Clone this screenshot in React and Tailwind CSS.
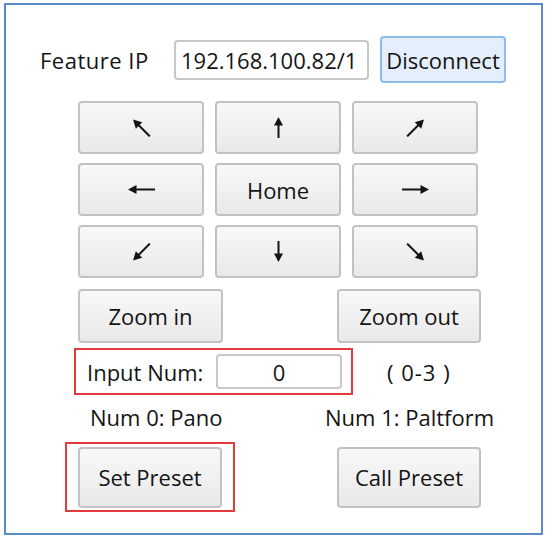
import React from 'react';

const Arrow = ({ len, className }) => (
    <svg width="11" height={len} viewBox={`0 0 11 ${len}`} className={className} aria-hidden>
        <polygon points="5.5,0 1,8.5 10,8.5" fill="#141414" />
        <line x1="5.5" y1="6" x2="5.5" y2={len} stroke="#141414" strokeWidth="2" />
    </svg>
);

const Btn = ({ className = '', children }) => (
    <button className={`flex items-center justify-center rounded-[4px] border-2 border-[#c2c2c2] bg-linear-to-b from-[#f8f8f8] to-[#e9e9e9] text-[#141414] ${className}`}>
        {children}
    </button>
);

const App = () => {
    const pad = [
        <Arrow key="nw" len={24} className="-rotate-45" />,
        <Arrow key="n" len={21} />,
        <Arrow key="ne" len={24} className="rotate-45" />,
        <Arrow key="w" len={27} className="-rotate-90" />,
        <span key="home">Home</span>,
        <Arrow key="e" len={27} className="rotate-90" />,
        <Arrow key="sw" len={24} className="-rotate-135" />,
        <Arrow key="s" len={21} className="rotate-180" />,
        <Arrow key="se" len={24} className="rotate-135" />
    ];

    return (
        <div className="w-[550px] h-[537px] bg-white pt-[3px] pl-[4px] font-['Open_Sans',sans-serif] text-[22px] leading-none text-[#141414]">
            <div className="w-[539px] h-[532px] border-2 border-[#5b8bc9] flex flex-col">
                {/* connection row */}
                <div className="mt-[31px] ml-[34px] h-[47px] flex items-center">
                    <span className="w-[134px] tracking-[0.5px]">Feature IP</span>
                    <div className="w-[195px] h-[40px] rounded-[4px] border-2 border-[#c8c8c8] bg-white flex items-center pl-[5px]">
                        192.168.100.82/1
                    </div>
                    <button className="ml-[11px] w-[126px] h-[47px] rounded-[4px] border-2 border-[#8dbdec] bg-[#e4effb] flex items-center justify-center">
                        Disconnect
                    </button>
                </div>

                {/* direction pad */}
                <div className="mt-[18px] ml-[72px] grid grid-cols-[126px_126px_126px] auto-rows-[53px] gap-x-[11px] gap-y-[9px]">
                    {pad.map((item, i) => (
                        <Btn key={i}>{item}</Btn>
                    ))}
                </div>

                <div className="mt-[11px] ml-[72px] flex">
                    <Btn className="w-[145px] h-[54px]">Zoom in</Btn>
                    <Btn className="ml-[114px] w-[144px] h-[54px]">Zoom out</Btn>
                </div>

                {/* preset number */}
                <div className="mt-[5px] flex items-center">
                    <div className="ml-[68px] w-[279px] h-[47px] border-2 border-[#e23b3b] flex items-center pl-[11px]">
                        <span className="w-[129px]">Input Num:</span>
                        <div className="w-[126px] h-[35px] rounded-[4px] border-2 border-[#c8c8c8] bg-white flex items-center justify-center">0</div>
                    </div>
                    <span className="ml-[34px] whitespace-pre tracking-[1px]">( 0-3 )</span>
                </div>

                <div className="mt-[7px] h-[30px] flex items-center">
                    <span className="ml-[84px] w-[235px]">Num 0: Pano</span>
                    <span>Num 1: Paltform</span>
                </div>

                <div className="mt-[10px] flex items-center">
                    <div className="ml-[59px] w-[170px] h-[70px] border-2 border-[#e23b3b] flex items-center justify-center">
                        <Btn className="w-[144px] h-[61px]">Set Preset</Btn>
                    </div>
                    <Btn className="ml-[102px] w-[144px] h-[61px]">Call Preset</Btn>
                </div>
            </div>
        </div>
    );
};

export default App;
